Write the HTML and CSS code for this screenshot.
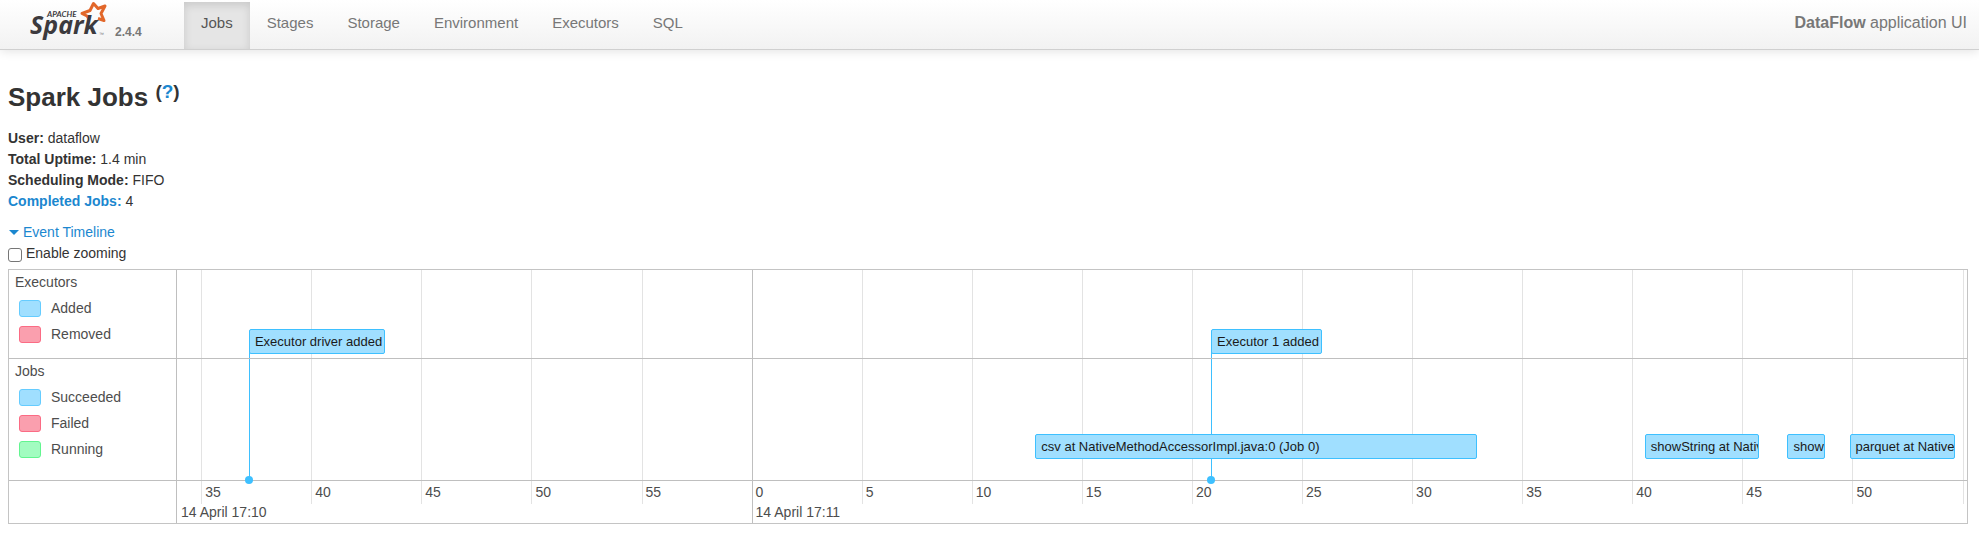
FILE: index.html
```html
<!DOCTYPE html>
<html lang="en">
<head>
<meta charset="utf-8">
<title>DataFlow - Spark Jobs</title>
<link rel="stylesheet" href="styles.css">
</head>
<body>
<header class="navbar">
  <a class="brand" href="#">
    <svg class="logo" viewBox="0 0 84 42" role="img" aria-label="Apache Spark">
      <text class="logo-small" x="21" y="17">APACHE</text>
      <path class="logo-star" d="M63 19 L61 16 L56 13.500 L64 10.500 L67.500 3.500 L72 8.500 L79 6 L75 13.500 L78 20.500 L72 18.500"/>
      <text class="logo-word" x="4" y="34">Spark</text>
      <text class="logo-mark" x="73" y="36">™</text>
    </svg>
    <span class="version">2.4.4</span>
  </a>
  <nav class="tabs">
    <a class="tab active" href="#">Jobs</a>
    <a class="tab" href="#">Stages</a>
    <a class="tab" href="#">Storage</a>
    <a class="tab" href="#">Environment</a>
    <a class="tab" href="#">Executors</a>
    <a class="tab" href="#">SQL</a>
  </nav>
  <p class="app-name"><strong>DataFlow</strong> application UI</p>
</header>
<main class="content">
  <h1 class="title">Spark Jobs <sup class="help">(<a href="#">?</a>)</sup></h1>
  <ul class="summary">
    <li><strong>User:</strong> dataflow</li>
    <li><strong>Total Uptime:</strong> 1.4 min</li>
    <li><strong>Scheduling Mode:</strong> FIFO</li>
    <li><a href="#"><strong>Completed Jobs:</strong></a> 4</li>
  </ul>
  <a class="expand" href="#"><span class="caret"></span>Event Timeline</a>
  <label class="zooming"><input class="check" type="checkbox">Enable zooming</label>

  <section class="timeline">
    <div class="ticks">
      <i class="tick" style="left:1.35%"></i>
      <i class="tick" style="left:7.5%"></i>
      <i class="tick" style="left:13.65%"></i>
      <i class="tick" style="left:19.8%"></i>
      <i class="tick" style="left:25.95%"></i>
      <i class="tick major" style="left:32.1%"></i>
      <i class="tick" style="left:38.25%"></i>
      <i class="tick" style="left:44.4%"></i>
      <i class="tick" style="left:50.55%"></i>
      <i class="tick" style="left:56.7%"></i>
      <i class="tick" style="left:62.85%"></i>
      <i class="tick" style="left:69%"></i>
      <i class="tick" style="left:75.15%"></i>
      <i class="tick" style="left:81.3%"></i>
      <i class="tick" style="left:87.45%"></i>
      <i class="tick" style="left:93.6%"></i>
      <i class="tick" style="left:99.75%"></i>
      <i class="stem" style="left:4.02%"></i>
      <i class="stem" style="left:57.77%"></i>
    </div>
    <div class="legend">
      <h2 class="group">Executors</h2>
      <div class="key"><span class="swatch blue"></span>Added</div>
      <div class="key"><span class="swatch red"></span>Removed</div>
    </div>
    <div class="lane">
      <div class="item" style="left:4.02%">Executor driver added</div>
      <div class="item" style="left:57.77%">Executor 1 added</div>
    </div>
    <div class="legend jobs">
      <h2 class="group">Jobs</h2>
      <div class="key"><span class="swatch blue"></span>Succeeded</div>
      <div class="key"><span class="swatch red"></span>Failed</div>
      <div class="key"><span class="swatch green"></span>Running</div>
    </div>
    <div class="lane jobs-lane">
      <div class="item" style="left:47.95%;width:24.65%">csv at NativeMethodAccessorImpl.java:0 (Job 0)</div>
      <div class="item" style="left:82%;width:6.4%">showString at Native</div>
      <div class="item" style="left:89.97%;width:2.12%">showS</div>
      <div class="item" style="left:93.44%;width:5.88%">parquet at NativeM</div>
    </div>
    <div class="corner"></div>
    <div class="axis">
      <span class="num" style="left:1.35%">35</span>
      <span class="num" style="left:7.5%">40</span>
      <span class="num" style="left:13.65%">45</span>
      <span class="num" style="left:19.8%">50</span>
      <span class="num" style="left:25.95%">55</span>
      <span class="num" style="left:32.1%">0</span>
      <span class="num" style="left:38.25%">5</span>
      <span class="num" style="left:44.4%">10</span>
      <span class="num" style="left:50.55%">15</span>
      <span class="num" style="left:56.7%">20</span>
      <span class="num" style="left:62.85%">25</span>
      <span class="num" style="left:69%">30</span>
      <span class="num" style="left:75.15%">35</span>
      <span class="num" style="left:81.3%">40</span>
      <span class="num" style="left:87.45%">45</span>
      <span class="num" style="left:93.6%">50</span>
      <span class="num date" style="left:0%">14 April 17:10</span>
      <span class="num date" style="left:32.1%">14 April 17:11</span>
      <i class="dot" style="left:4.02%"></i>
      <i class="dot" style="left:57.77%"></i>
    </div>
  </section>
</main>
</body>
</html>
```
FILE: styles.css
```css
* {
  box-sizing: border-box;
}

body {
  margin: 0;
  background: #fff;
  color: #333;
  font: 14px/21px "Liberation Sans", Arial, sans-serif;
}

a {
  color: #1b87cf;
  text-decoration: none;
}

/* navigation bar */
.navbar {
  display: flex;
  height: 50px;
  padding: 0 12px 0 26px;
  background: linear-gradient(#fff, #f2f2f2);
  border-bottom: 1px solid #d0d0d0;
  box-shadow: 0 1px 10px rgba(0, 0, 0, 0.12);
  font-size: 15px;
  color: #777;
}

.brand {
  display: flex;
  width: 158px;
  color: #777;
}

.logo {
  width: 84px;
  height: 42px;
  overflow: visible;
}

.logo-word {
  font: italic 700 25px "Open Sans", sans-serif;
  fill: #3c3a3e;
}

.logo-small {
  font: italic 700 8px Lato, sans-serif;
  fill: #3c3a3e;
}

.logo-mark {
  font: 5px "Liberation Sans", sans-serif;
  fill: #777;
}

.logo-star {
  fill: none;
  stroke: #e2672a;
  stroke-width: 3;
  stroke-linejoin: round;
}

.version {
  padding: 22px 0 0 5px;
  font-size: 12px;
  font-weight: bold;
}

.tabs {
  display: flex;
  padding-top: 2px;
}

.tab {
  padding: 10px 17px;
  color: #777;
}

.tab.active {
  background: #e5e5e5;
  box-shadow: inset 0 3px 8px rgba(0, 0, 0, 0.125);
  color: #555;
}

.app-name {
  margin: 0 0 0 auto;
  padding-top: 12px;
  font-size: 16px;
}

/* job summary */
.content {
  padding: 26px 11px 0 8px;
}

.title {
  margin: 0;
  font-size: 26px;
  line-height: 42px;
}

.help {
  position: relative;
  top: -8px;
  font-size: 19px;
  line-height: 0;
  vertical-align: baseline;
}

.summary {
  margin: 10px 0 9px;
  padding: 0;
  list-style: none;
}

.expand {
  display: flex;
  align-items: center;
  line-height: 22px;
}

.caret {
  margin: 0 4px 0 1px;
  border: 5px solid transparent;
  border-top-color: #1b87cf;
  border-bottom: 0;
}

.zooming {
  display: flex;
  align-items: center;
  gap: 4px;
  margin-bottom: 5px;
}

.check {
  appearance: none;
  width: 14px;
  height: 14px;
  margin: 2px 0 0;
  border: 1px solid #767676;
  border-radius: 3px;
  background: #fff;
}

/* event timeline */
.timeline {
  position: relative;
  display: grid;
  grid-template-columns: 168px 1fr;
  border: 1px solid #c4c4c4;
  color: #4d4d4d;
}

.legend {
  padding: 0 6px 11px;
  border-right: 1px solid #bfbfbf;
  border-bottom: 1px solid #bfbfbf;
}

.legend.jobs {
  padding-bottom: 18px;
}

.group {
  margin: 0;
  font-size: 14px;
  font-weight: normal;
  line-height: 25px;
}

.key {
  display: flex;
  align-items: center;
  gap: 10px;
  height: 26px;
  padding-left: 4px;
}

.swatch {
  width: 22px;
  height: 17px;
  border: 1px solid;
  border-radius: 3px;
}

.blue {
  background: #a0dfff;
  border-color: #65ccff;
}

.red {
  background: #fa9fae;
  border-color: #fb6b84;
}

.green {
  background: #a2fcc0;
  border-color: #62f58f;
}

.lane {
  position: relative;
  border-bottom: 1px solid #bfbfbf;
}

.ticks {
  position: absolute;
  inset: 0 0 0 168px;
  overflow: hidden;
}

.tick {
  position: absolute;
  top: 0;
  bottom: 19px;
  border-left: 1px solid #e3e3e3;
}

.tick.major {
  bottom: 0;
  border-color: #bfbfbf;
}

.stem {
  position: absolute;
  top: 80px;
  bottom: 43px;
  border-left: 1px solid #3ec0ff;
}

.item {
  position: absolute;
  bottom: 4px;
  height: 25px;
  padding: 0 2px 0 5px;
  border: 1px solid #3ec0ff;
  border-radius: 2px;
  background: #a0dfff;
  color: #1a1a1a;
  font-size: 13px;
  line-height: 23px;
  white-space: nowrap;
  overflow: hidden;
}

.jobs-lane .item {
  bottom: 21px;
}

.corner {
  border-right: 1px solid #bfbfbf;
}

.axis {
  position: relative;
  height: 42px;
}

.num {
  position: absolute;
  top: 1px;
  padding-left: 4px;
}

.date {
  top: 21px;
}

.dot {
  position: absolute;
  top: -5px;
  width: 8px;
  height: 8px;
  margin-left: -4px;
  border-radius: 50%;
  background: #3ec0ff;
}
```
